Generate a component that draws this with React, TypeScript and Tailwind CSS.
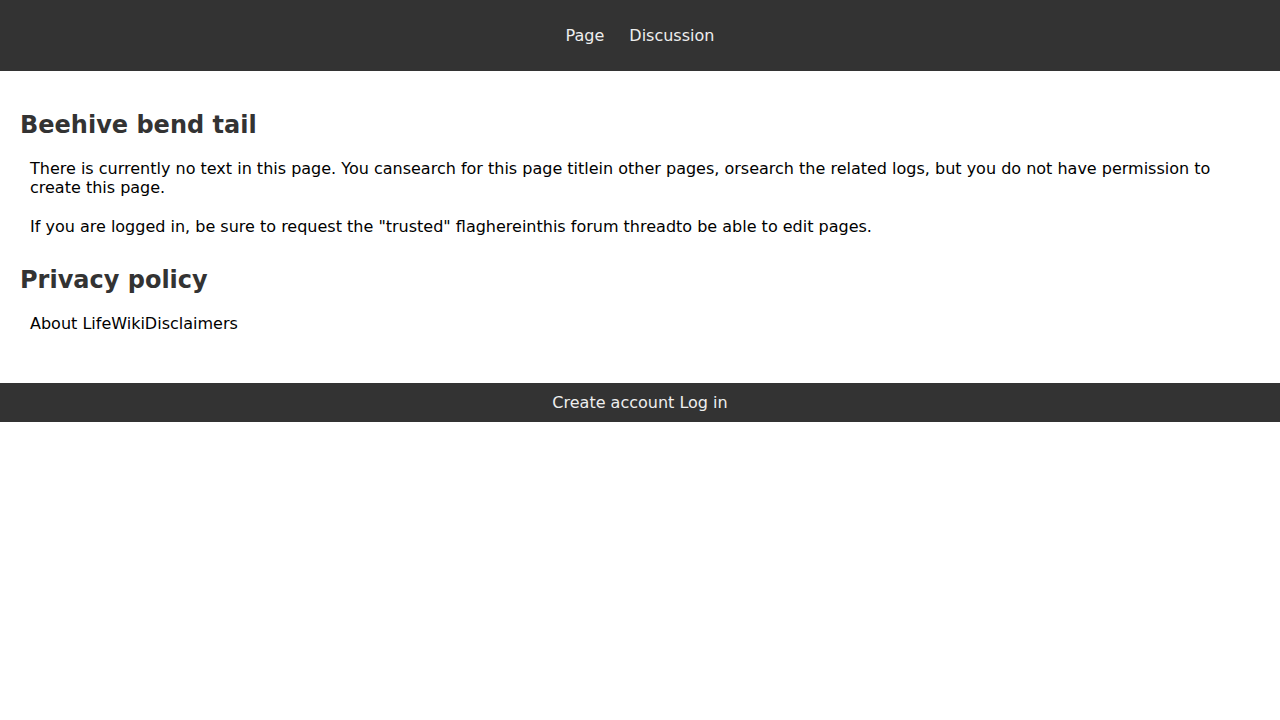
const font = { fontFamily: '"DejaVu Sans", Verdana, sans-serif' };

export default function App() {
  return (
    <div className="min-h-[720px] bg-white" style={font}>
      <header className="h-[71px] bg-[#333333] flex items-center justify-center gap-[25px] text-[16px] leading-[19px] text-[#eeeeee]">
        <a href="#">Page</a>
        <a href="#">Discussion</a>
      </header>

      <main className="px-5 pt-10 pb-[50px] text-black">
        <h1 className="text-[24px] leading-[28px] font-bold text-[#333333]">Beehive bend tail</h1>
        <div className="mt-5 px-[10px] text-[16px] leading-[19px]">
          <p>
            There is currently no text in this page. You can<a href="#">search for this page title</a>in other pages, or
            <a href="#">search the related logs</a>, but you do not have permission to create this page.
          </p>
          <p className="mt-5">
            If you are logged in, be sure to request the "trusted" flag<a href="#">here</a>in
            <a href="#">this forum thread</a>to be able to edit pages.
          </p>
        </div>

        <h2 className="mt-[30px] text-[24px] leading-[28px] font-bold text-[#333333]">Privacy policy</h2>
        <div className="mt-5 px-[10px] text-[16px] leading-[19px]">
          <a href="#">About LifeWiki</a>
          <a href="#">Disclaimers</a>
        </div>
      </main>

      <footer className="h-[39px] bg-[#333333] flex items-center justify-center text-[16px] leading-[19px] text-[#eeeeee]">
        <a href="#">Create account</a>&nbsp;<a href="#">Log in</a>
      </footer>
    </div>
  );
}
